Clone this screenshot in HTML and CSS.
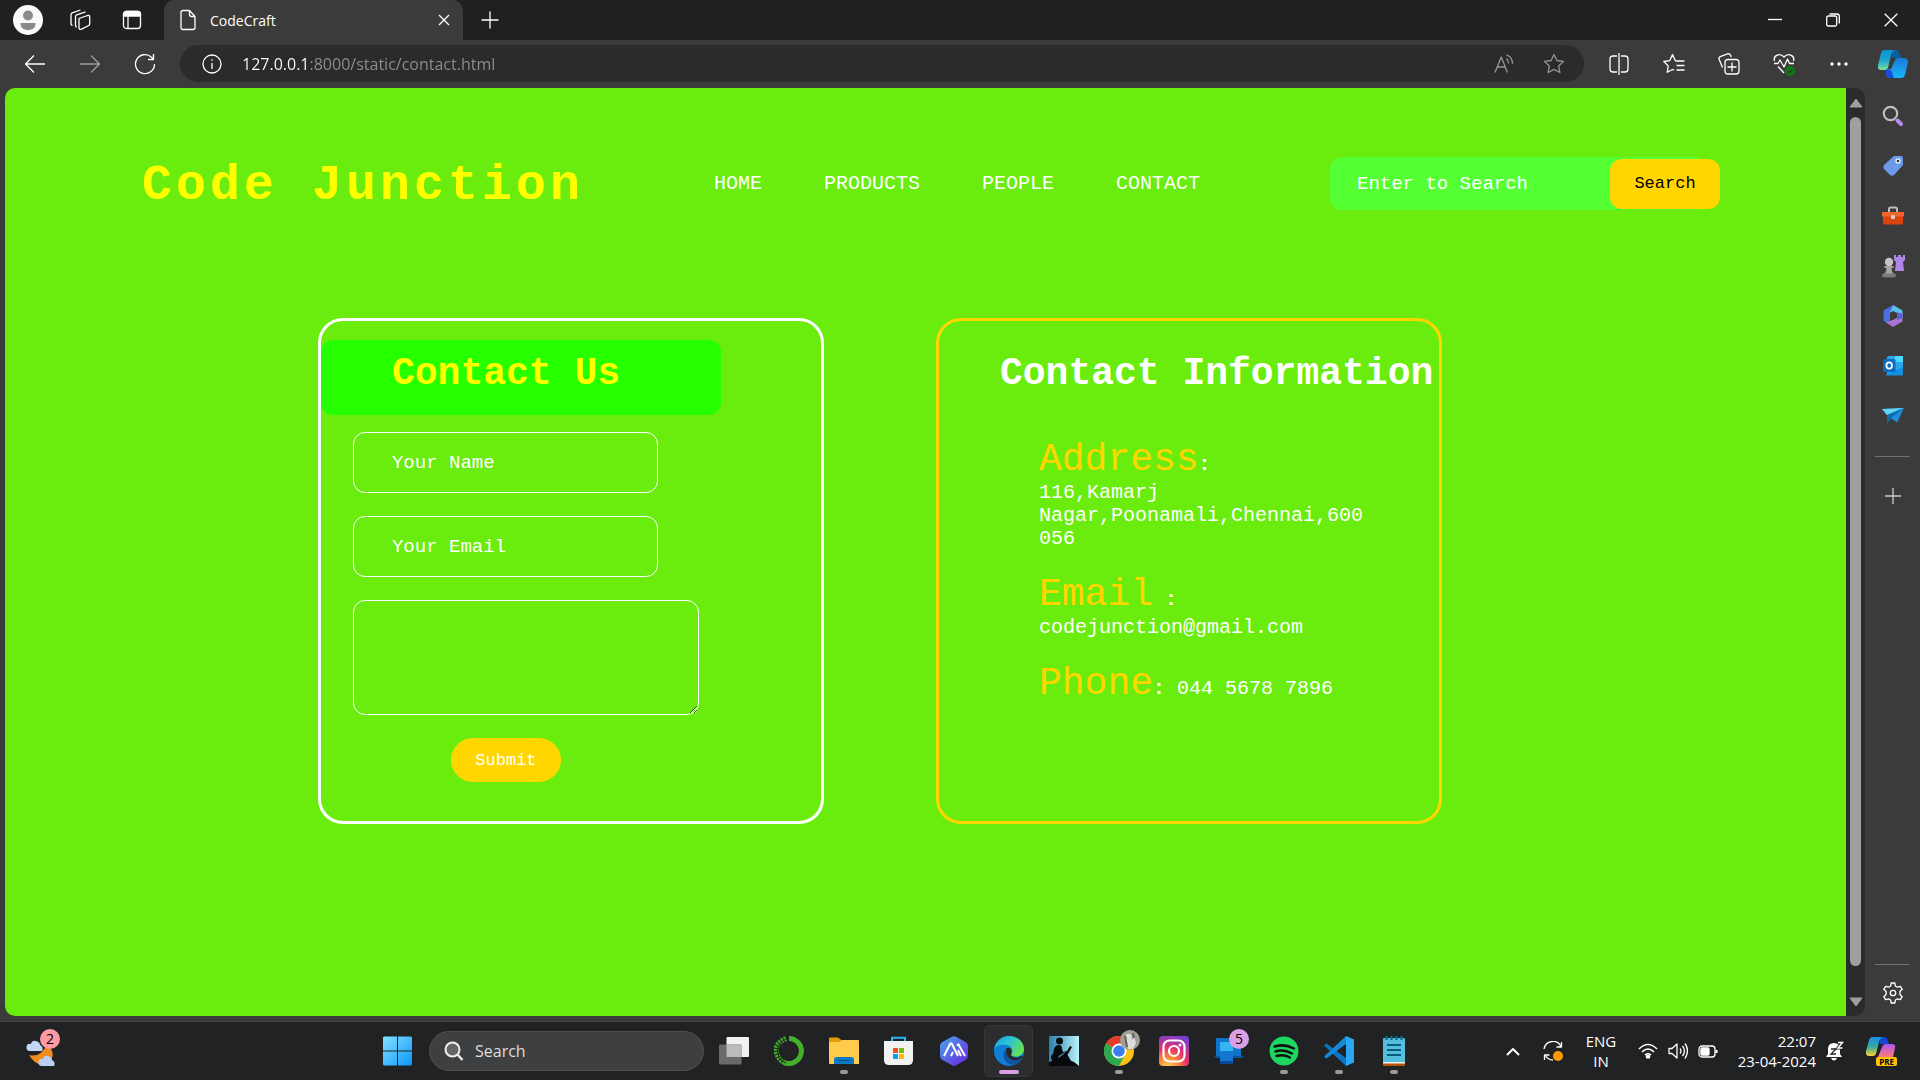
FILE: index.html
```html
<!DOCTYPE html>
<html lang="en">
<head>
<meta charset="utf-8">
<title>CodeCraft</title>
<link rel="stylesheet" href="styles.css">
</head>
<body>
<div class="tabbar">
  <button class="tab-tool" aria-label="Profile"><svg width="30" height="30" viewBox="0 0 30 30"><circle cx="15" cy="15" r="15" fill="#fafafa"/><circle cx="15" cy="10.500" r="5" fill="#8a8a8a"/><path d="M7.500 18h15c0 5-3 7-7.500 7s-7.500-2-7.500-7z" fill="#8a8a8a"/></svg></button>
  <button class="tab-tool" aria-label="Workspaces"><svg width="22" height="22" viewBox="0 0 22 22" class="line"><path d="M10 9.500l8.500-3q2.200-.5 2.200 1.500v7q0 1-1 1.500l-7.200 3.700q-2.500.8-2.500-1.500zM6.500 17V7.500q0-1.200 1.200-1.700l8.800-3M6.500 17l1 1.300M2 15V5.500q0-1.200 1.200-1.700L11.500 1M2 15q.2 1 1.500 1.500"/></svg></button>
  <button class="tab-tool" aria-label="Tab actions"><svg width="20" height="20" viewBox="0 0 20 20" class="line"><rect x="1.500" y="1.500" width="17" height="17" rx="3"/><path d="M1.500 4.500q0-3 3-3h11q3 0 3 3v1.500h-17z" fill="#fff"/><path d="M6 6v12"/></svg></button>
  <div class="tab">
    <svg width="18" height="22" viewBox="0 0 18 22" class="line"><path d="M4 1.500h6.500l5.500 6v11q0 2-2 2H4q-2 0-2-2v-15q0-2 2-2zM10.500 1.500v4q0 2 2 2H16"/></svg>
    <span class="tab-title">CodeCraft</span>
    <button aria-label="Close tab"><svg width="14" height="14" viewBox="0 0 14 14" class="line"><path d="M2 2l10 10M12 2L2 12"/></svg></button>
  </div>
  <button class="new-tab" aria-label="New tab"><svg width="18" height="18" viewBox="0 0 18 18" class="line"><path d="M9 0.500v17M0.500 9h17"/></svg></button>
  <div class="window-controls">
    <button aria-label="Minimize"><svg width="14" height="14" viewBox="0 0 14 14" class="line"><path d="M0 6.500h14"/></svg></button>
    <button aria-label="Restore"><svg width="14" height="14" viewBox="0 0 14 14" class="line"><rect x=".7" y="3" width="10" height="10" rx="1.500"/><path d="M3.500 1H11q2.300 0 2.300 2.300V10.500"/></svg></button>
    <button aria-label="Close"><svg width="14" height="14" viewBox="0 0 14 14" class="line"><path d="M.7.7l12.600 12.600M13.300.7L.7 13.300"/></svg></button>
  </div>
</div>

<div class="toolbar">
  <button class="tool" aria-label="Back"><svg width="22" height="20" viewBox="0 0 22 20" class="line"><path d="M21 10H1.500M10 1.500L1.500 10l8.500 8.500"/></svg></button>
  <button class="tool dim" aria-label="Forward"><svg width="22" height="20" viewBox="0 0 22 20" class="line"><path d="M1 10h19.500M12 1.500l8.500 8.500-8.500 8.500"/></svg></button>
  <button class="tool" aria-label="Refresh"><svg width="22" height="22" viewBox="0 0 22 22" class="line"><path d="M20.500 11A9.500 9.500 0 1 1 17.500 4.200L19.500 6M19.500 1v5.500H14"/></svg></button>
  <div class="address">
    <svg width="20" height="20" viewBox="0 0 20 20" class="line"><circle cx="10" cy="10" r="9"/><path d="M10 9v6M10 5.200v1.600"/></svg>
    <input class="url" type="text" aria-label="Address" value="127.0.0.1:8000/static/contact.html">
    <button class="dim" aria-label="Read aloud"><svg width="20" height="20" viewBox="0 0 20 20" class="line"><path d="M1 18.500L7.300 3l6 15.500M3.300 13h8M12.500 4.500q2 2 2 5M12.500.8q6 2.200 6 9"/></svg></button>
    <button class="dim" aria-label="Add to favorites"><svg width="22" height="22" viewBox="0 0 22 22" class="line"><path d="M11 1.500l2.900 6 6.600.9-4.800 4.600 1.200 6.500-5.900-3.100-5.900 3.100 1.200-6.500L1.500 8.400l6.600-.9z"/></svg></button>
  </div>
  <button class="tool" aria-label="Split screen"><svg width="20" height="22" viewBox="0 0 20 22" class="line"><path d="M10 0v22M8 3H4Q1 3 1 6v10q0 3 3 3h4M12 3h4q3 0 3 3v10q0 3-3 3h-4"/></svg></button>
  <button class="tool" aria-label="Favorites"><svg width="22" height="22" viewBox="0 0 22 22" class="line"><path d="M12.500 8L9.500 1.500 6.800 7.600.8 8.500l4.400 4.400-1 6.400L9.500 16.500l1.500.7M12.500 8h9M13.500 12.500h8M13.500 17h8"/></svg></button>
  <button class="tool" aria-label="Collections"><svg width="22" height="22" viewBox="0 0 22 22" class="line"><path d="M4.500 14.500L1.200 6.500q-.8-2 1-2.900L9.500.9q2-.6 3 1.200l.8 2M10 6.500h8q3 0 3 3v8.500q0 3-3 3h-8q-3 0-3-3V9.500q0-3 3-3zM14 9.500v9M9.500 14h9"/></svg></button>
  <button class="tool" aria-label="Browser essentials"><svg width="22" height="24" viewBox="0 0 22 24" class="line"><path d="M1.500 9C0 3 7 .5 11 5c4-4.500 11-2 9.500 4M1 11.500h4l2-3.500 4 7 3.500-8 2 4.500H21M5 14.500l6 6.500"/><circle cx="17" cy="19" r="5" fill="#0e7a0e" stroke="none"/><path d="M14.700 19l1.700 1.700 3-3.200" stroke="#333"/></svg></button>
  <button class="tool" aria-label="Settings and more"><svg width="18" height="4" viewBox="0 0 18 4"><circle cx="2" cy="2" r="1.700" fill="#fff"/><circle cx="9" cy="2" r="1.700" fill="#fff"/><circle cx="16" cy="2" r="1.700" fill="#fff"/></svg></button>
  <button class="tool" aria-label="Copilot"><svg width="30" height="28" viewBox="0 0 30 28"><defs><linearGradient id="ca" x1="0" y1="0" x2="0" y2="1"><stop offset="0" stop-color="#0b94d4"/><stop offset=".5" stop-color="#18a5d0"/><stop offset="1" stop-color="#7ee0a0"/></linearGradient><linearGradient id="cb" x1="0" y1="0" x2="0" y2="1"><stop offset="0" stop-color="#1d78dd"/><stop offset="1" stop-color="#19b5fa"/></linearGradient></defs><path d="M8 20l5-1 4-9q1-2 3-2h6q4 0 4 4l-3 13q-1 3-4 3H12q-3 0-4-4z" fill="url(#cb)"/><path d="M8 20h5l3 8h-4q-3 0-4-4z" fill="#174bd8"/><path d="M14 0h4q3 0 4 4l1 4h-9z" fill="#075f98"/><path d="M6 0h11q-3 1-4 5l-3 13q-1 2-3 2H3q-4 0-3-5L3 3q1-3 3-3z" fill="url(#ca)"/></svg></button>
</div>

<div class="workspace">
  <main class="site">
    <header class="site-header">
      <h1 class="logo">Code Junction</h1>
      <nav class="site-nav"><a href="#">HOME</a><a href="#">PRODUCTS</a><a href="#">PEOPLE</a><a href="#">CONTACT</a></nav>
      <form class="site-search"><input type="text" aria-label="Enter to Search" placeholder="Enter to Search"><button type="button">Search</button></form>
    </header>
    <div class="cards">
      <section class="card card-form">
        <h2 class="banner">Contact Us</h2>
        <form class="contact-form">
          <input type="text" aria-label="Your Name" placeholder="Your Name">
          <input type="email" aria-label="Your Email" placeholder="Your Email">
          <textarea aria-label="Message"></textarea>
          <button type="button">Submit</button>
        </form>
      </section>
      <section class="card card-info">
        <h2>Contact Information</h2>
        <div class="details">
          <p><span class="label">Address</span><b>:</b><br>116,Kamarj Nagar,Poonamali,Chennai,600 056</p>
          <p><span class="label">Email</span> <b>:</b><br>codejunction@gmail.com</p>
          <p><span class="label">Phone</span><b>:</b> 044 5678 7896</p>
        </div>
      </section>
    </div>
  </main>
  <div class="scrollbar">
    <svg width="14" height="10" viewBox="0 0 14 10"><path d="M7 1l6 8H1z" fill="#9f9f9f" stroke="#9f9f9f" stroke-linejoin="round"/></svg>
    <div class="thumb"></div>
    <svg class="down" width="14" height="10" viewBox="0 0 14 10"><path d="M7 9l6-8H1z" fill="#9f9f9f" stroke="#9f9f9f" stroke-linejoin="round"/></svg>
  </div>
  <aside class="sidebar">
    <button aria-label="Search"><svg width="22" height="22" viewBox="0 0 22 22"><circle cx="8.500" cy="8.500" r="6.700" fill="none" stroke="#bdbdbd" stroke-width="2.200"/><path d="M15.500 15.500l3.500 3.500" stroke="#b98af0" stroke-width="4" stroke-linecap="round"/></svg></button>
    <button aria-label="Shopping"><svg width="22" height="22" viewBox="0 0 22 22"><path d="M12 1h7q2 0 2 2v7l-9 10q-2 1.500-4 0l-6-6q-1.500-2 0-4z" fill="#6c9ae8"/><circle cx="16" cy="6" r="2.700" fill="#e8eefc"/><circle cx="16" cy="6" r="1.300" fill="#333"/></svg></button>
    <button aria-label="Tools"><svg width="22" height="20" viewBox="0 0 22 20"><path d="M7 6V3q0-1.500 1.500-1.500h5Q15 1.500 15 3v3" fill="none" stroke="#bdbdbd" stroke-width="2"/><path d="M1 10h20v7q0 1.500-1.500 1.500h-17Q1 18.500 1 17z" fill="#d9440c"/><path d="M0 6h22v4.500H0z" fill="#f2652b"/><circle cx="11" cy="11" r="2.200" fill="#d0d0d0"/></svg></button>
    <button aria-label="Games"><svg width="24" height="24" viewBox="0 0 24 24"><path d="M13 1h2v2h2V1h3v2h2V1h2v5l-2 2 1 9h-9l1-9-2-2z" fill="#b184e8"/><circle cx="8" cy="8" r="4.200" fill="#c4c4c4"/><path d="M3.500 12h9v2h-2q0 4 2.500 6H3q2.500-2 2.500-6h-2z" fill="#a5a5a5"/><rect x="1" y="19.500" width="14" height="4" rx="2" fill="#7a7a7a"/></svg></button>
    <button aria-label="Microsoft 365"><svg width="22" height="24" viewBox="0 0 22 24"><path d="M11 1L1.500 6.500v10L5 19l3-2V9l5-3V2z" fill="#4d6fdd"/><path d="M11 1l9.500 5.500V14L15 11.500V9l-7-1 3-6z" fill="#5cc0ef"/><path d="M20.500 9v8.500L11 23l-7-4.500 4-1.500 7-3.500V9z" fill="#a974d3"/><path d="M15 8l5.500 2v4L15 16z" fill="#5b5fd0"/><path d="M8 9l3-2 4 2v4.500l-4 2.500-3-2z" fill="#3b3b3b"/></svg></button>
    <button aria-label="Outlook"><svg width="22" height="20" viewBox="0 0 22 20"><rect x="5" width="16" height="19" rx="1.500" fill="#28a8ea"/><path d="M13 0h8v6h-8z" fill="#50d9ff"/><path d="M3 19l18-8v7q0 1.500-1.500 1.500h-15z" fill="#1490df"/><rect x="1" y="3" width="12.500" height="13" rx="1.500" fill="#0a6cc0"/><ellipse cx="7.200" cy="9.500" rx="2.800" ry="3.200" fill="none" stroke="#fff" stroke-width="1.800"/></svg></button>
    <button aria-label="Drop"><svg width="22" height="18" viewBox="0 0 22 18"><path d="M0 2L22 1 15 15.500 9 11l-4 5V8z" fill="#1e8fd8"/><path d="M0 2L22 1 5 8z" fill="#62d4f5"/><path d="M5 8l17-7L9 11l-4 5z" fill="#0b6bb0"/></svg></button>
    <hr>
    <button aria-label="Customize"><svg width="16" height="16" viewBox="0 0 16 16" class="line"><path d="M8 0v16M0 8h16" stroke="#ccc"/></svg></button>
    <hr class="push">
    <button class="settings" aria-label="Settings"><svg width="22" height="22" viewBox="0 0 22 22" class="line"><circle cx="11" cy="11" r="2.700"/><path d="M9.200 1h3.600l.6 3 2 1.200 3-.9 1.800 3-2.300 2.200v3l2.300 2.200-1.800 3-3-.9-2 1.200-.6 3H9.200l-.6-3-2-1.200-3 .9-1.800-3 2.300-2.200v-3L1.800 7.300l1.800-3 3 .9 2-1.200z"/></svg></button>
  </aside>
</div>

<footer class="taskbar">
  <button class="weather" aria-label="Weather"><svg width="34" height="34" viewBox="0 0 34 34"><path d="M3 21q12 3 18-11 9 9 4 16-12 11-22-5z" fill="#f08c1e"/><path d="M4 17q-4 0-3.500-4T5 10q1-4 5-3t4 4q4 2 2 6z" fill="#c4d6f5"/><path d="M16 32q-4 0-3.500-4t4.500-3q1-4 5-3t4 4q4 2 2 6z" fill="#b9cff2"/></svg><span class="badge badge-pink">2</span></button>
  <div class="apps">
    <button aria-label="Start"><svg width="30" height="30" viewBox="0 0 30 30"><defs><linearGradient id="w" x1="0" y1="0" x2="1" y2="1"><stop offset="0" stop-color="#86e0ff"/><stop offset="1" stop-color="#0a97fa"/></linearGradient></defs><path d="M1 .5h13v14H0V1.500zM15 .5h13l1 1v13H15zM0 15.500h14v14H1l-1-1zM15 15.500h14v13l-1 1H15z" fill="url(#w)"/></svg></button>
    <label class="task-search"><svg width="20" height="20" viewBox="0 0 20 20"><circle cx="8.500" cy="8.500" r="7" fill="#666" stroke="#eee" stroke-width="2"/><path d="M13.500 13.500L18.500 19" stroke="#eee" stroke-width="2.400"/></svg><input type="text" aria-label="Search" placeholder="Search"></label>
    <button aria-label="Task view"><svg width="30" height="28" viewBox="0 0 30 28"><rect x="7.500" width="22.500" height="20" rx="1" fill="#f2f2f2"/><rect y="7.500" width="22.500" height="20" rx="1" fill="#6a6a6a"/><path d="M7.500 7.500h15V20h-15z" fill="#bbb"/></svg></button>
    <button aria-label="Anaconda"><svg width="30" height="30" viewBox="0 0 30 30" fill="none" stroke="#43b02a"><path d="M15 2.500a12.500 12.500 0 1 1-5 24" stroke-width="5"/><path d="M12 2.500Q-1 8 3 18q2 7 9 9.500" stroke-width="5" stroke-dasharray="2 1"/><path d="M12 3Q1 8 4 18q2 7 8 9" stroke="#222" stroke-width="1"/></svg></button>
    <button class="running" aria-label="File Explorer"><svg width="30" height="28" viewBox="0 0 30 28"><path d="M0 1.500Q0 .5 1 .5h8l4 3v6H0z" fill="#e09b0b"/><path d="M0 5h9q2 0 4-2h16q1 0 1 1v23H1q-1 0-1-1z" fill="#ffcb4b"/><path d="M5 27v-4q0-3 3-3h14q3 0 3 3v4z" fill="#0f78c9"/><path d="M9 23.500h12" stroke="#084a85"/></svg></button>
    <button aria-label="Microsoft Store"><svg width="30" height="30" viewBox="0 0 30 30"><path d="M8 6V1.700h13V6" fill="none" stroke="#28b7f0" stroke-width="2"/><path d="M0 5h29v19q0 5-5 5H5q-5 0-5-5z" fill="#f2f2f2"/><path d="M9 12h5v5H9z" fill="#f25022"/><path d="M15 12h5v5h-5z" fill="#7fba00"/><path d="M9 18h5v5H9z" fill="#00a4ef"/><path d="M15 18h5v5h-5z" fill="#ffb900"/></svg></button>
    <button aria-label="App"><svg width="28" height="30" viewBox="0 0 28 30"><defs><linearGradient id="h" x1="0" y1="0" x2="1" y2="1"><stop offset="0" stop-color="#4aa8e8"/><stop offset="1" stop-color="#6a22e0"/></linearGradient></defs><path d="M12 .8q2-1 4 0l10 5.500q2 1 2 3.500v10.500q0 2.500-2 3.500l-10 5.500q-2 1-4 0L2 23.800q-2-1-2-3.500V9.800Q0 7.300 2 6.300z" fill="url(#h)"/><path d="M4 20l6-12q1-1.500 2 0l6 12M11 20l2-4M18 14l3 6M17 9.500l1.500-1L25 20" fill="none" stroke="#fff" stroke-width="2"/></svg></button>
    <button class="active" aria-label="Microsoft Edge"><svg width="30" height="30" viewBox="0 0 30 30"><defs><linearGradient id="e" x1="0" y1="0" x2="1" y2=".5"><stop offset="0" stop-color="#1b9de0"/><stop offset=".5" stop-color="#2cc3d4"/><stop offset="1" stop-color="#63e05c"/></linearGradient></defs><circle cx="15" cy="15" r="15" fill="#0f7fd6"/><path d="M0 13C2 3 10 0 15 0c9 0 15 6 15 13 0 5-4 7.500-8 7.500-3 0-5-1-4.500-2.500 2-3 1-8-5-9C7 8 2 10 0 13z" fill="url(#e)"/><path d="M11 14c-4 6 0 14 8 15 4-1 7-4 8.500-7C20 26 12 22 11 14z" fill="#10539f"/><path d="M12 13c3-3 6 0 5.500 3-.5 2-1 3.500.5 4.500 3 2 8 1 9-1l2 1-4 4c-8 1-14-4-13-11.500z" fill="#262626"/><path d="M11.500 16c-.5 7 8 11 16 6l-3 4.500C17 30 8 24 11.500 16z" fill="#10539f"/></svg></button>
    <button aria-label="Kindle"><svg width="30" height="30" viewBox="0 0 30 30"><defs><linearGradient id="k"><stop offset="0" stop-color="#2b7fae"/><stop offset="1" stop-color="#b8f4fb"/></linearGradient></defs><path d="M0 0h30v30H0z" fill="url(#k)"/><circle cx="10.500" cy="5" r="3.500" fill="#07090c"/><path d="M0 30v-4l3-1-1-4q0-2 2-3l1-5q1-4 5-4 3 0 3 4l1 3 4-1 3-5 2 1-4 7-5 3 6 3 5 2 5 4z" fill="#07090c"/><path d="M10 20l6-4 1 4-5 5H8z" fill="#5fb4d0"/><path d="M8 23l9-7 5 9H8z" fill="#07090c"/></svg></button>
    <button class="running" aria-label="Chrome"><svg width="36" height="36" viewBox="0 0 36 36"><circle cx="15" cy="21" r="15" fill="#fbc116"/><path d="M15 21L2 13.500A15 15 0 0 1 28 13.500H15z" fill="#e33b2e"/><path d="M2 13.500A15 15 0 0 0 15 36l6-11.500-6-3.500z" fill="#2da94f"/><circle cx="15" cy="21" r="7.500" fill="#fff"/><circle cx="15" cy="21" r="5.800" fill="#3b7ded"/><circle cx="26" cy="10" r="10" fill="#a19f98"/><path d="M22 4h5l1 6 2-3 2 6-3 6h-5z" fill="#dcdcda"/><path d="M21 6l2 11M29 3l1 5" stroke="#62665f" stroke-width="2"/></svg></button>
    <button aria-label="Instagram"><svg width="30" height="30" viewBox="0 0 30 30"><defs><radialGradient id="i" cx=".3" cy="1.050" r="1.100"><stop offset="0" stop-color="#ffd35a"/><stop offset=".3" stop-color="#fb8d38"/><stop offset=".6" stop-color="#e6306c"/><stop offset="1" stop-color="#7a3fd0"/></radialGradient></defs><rect width="30" height="30" rx="4" fill="url(#i)"/><g fill="none" stroke="#fff" stroke-width="2.200"><rect x="4.500" y="4.500" width="21" height="21" rx="6"/><circle cx="15" cy="15" r="5"/></g><circle cx="21" cy="9" r="1.500" fill="#fff"/></svg></button>
    <button aria-label="Phone Link"><svg width="30" height="30" viewBox="0 0 30 30"><path d="M2 2h25v18H2z" fill="#0f74c8"/><path d="M0 20h30l-2 2H2z" fill="#0a549a"/><path d="M6 6h13v20H6z" fill="#34b4f0"/><path d="M6 15h13v11H6z" fill="#1477d4"/><path d="M6 25h13v3H6z" fill="#0b4a9a"/></svg><span class="badge badge-lilac">5</span></button>
    <button class="running" aria-label="Spotify"><svg width="30" height="30" viewBox="0 0 30 30"><circle cx="15" cy="15" r="14.500" fill="#1ed760"/><path d="M5.500 10.500q10-3 19.500 2M6.500 15.500q8.500-2.500 16.500 2M7.500 20q7-2 13.500 1.500" fill="none" stroke="#111" stroke-width="2.500" stroke-linecap="round"/></svg></button>
    <button class="running" aria-label="VS Code"><svg width="30" height="30" viewBox="0 0 30 30"><path d="M0 9.500l2.500-2L22 22v8z" fill="#0b74be"/><path d="M0 20.500l2.500 2L22 8V0z" fill="#1688d4"/><path d="M22 0l8 3.500v23L22 30z" fill="#2aa6f2"/></svg></button>
    <button class="running" aria-label="Notepad"><svg width="22" height="30" viewBox="0 0 22 30"><path d="M0 26h22v3q0 1-1 1H1q-1 0-1-1z" fill="#b5550d"/><path d="M0 25h22v2.500H0z" fill="#eee"/><path d="M0 3q0-1 1-1h20q1 0 1 1v23H0z" fill="#54bfdd"/><path d="M4 9h14M4 14h14M4 19h14" stroke="#065b7d" stroke-width="1.800"/><path d="M3.500 0v4M8.500 0v4M13.500 0v4M18.500 0v4" stroke="#0b6d8d" stroke-width="2.200"/></svg></button>
  </div>
  <div class="tray">
    <button class="w40" aria-label="Show hidden icons"><svg width="14" height="9" viewBox="0 0 14 9" class="line bold"><path d="M1 8l6-6 6 6"/></svg></button>
    <button class="w40" aria-label="Update"><svg width="20" height="20" viewBox="0 0 20 20" class="line"><path d="M1 8A9 9 0 0 1 18 5.500M18.500 1v5H13.500M2 14q3 5 8 5M1.500 19v-5H6.500"/><circle cx="15" cy="15" r="5" fill="#ff9800" stroke="none"/></svg></button>
    <div class="lang">ENG<br>IN</div>
    <button class="w30" aria-label="Network"><svg width="20" height="16" viewBox="0 0 20 16" class="line mid"><path d="M1 6q9-9 18 0M4 9q6-6 12 0M7 12q3-3 6 0"/><circle cx="10" cy="13.500" r="1.500" fill="#fff"/></svg></button>
    <button class="w30" aria-label="Volume"><svg width="20" height="18" viewBox="0 0 20 18" class="line"><path d="M1 6.500h3l5-4.500v14l-5-4.500H1zM12 6.500q2 2.500 0 5M14.500 4q4 5 0 10M17 1.500q5 7 0 15"/></svg></button>
    <button class="w30" aria-label="Battery"><svg width="20" height="13" viewBox="0 0 20 13" class="line"><rect x="1" y="1" width="16" height="11" rx="3"/><rect x="3" y="3" width="8" height="7" rx="1" fill="#fff"/><path d="M18.500 5v3" stroke-width="2"/></svg></button>
    <div class="clock">22:07<br>23-04-2024</div>
    <button class="w38" aria-label="Notifications"><svg width="18" height="20" viewBox="0 0 18 20"><path d="M8 2q6 0 6 6v5l2 3H0l2-3V8q0-6 6-6zM5 17h6q-1 2.500-3 2.500T5 17z" fill="#fff"/><path d="M5 8h5l-5 5h5" fill="none" stroke="#222" stroke-width="1.300"/><path d="M12 1.500h4.500L12 7h4.500" fill="none" stroke="#222" stroke-width="3"/><path d="M12 1.500h4.500L12 7h4.500" fill="none" stroke="#fff" stroke-width="1.400"/></svg></button>
    <button class="pre" aria-label="Copilot preview"><svg width="30" height="28" viewBox="0 0 30 28"><defs><linearGradient id="p" x1="0" y1="0" x2="0" y2="1"><stop offset="0" stop-color="#1b8de8"/><stop offset=".5" stop-color="#31a9a0"/><stop offset="1" stop-color="#ffd22e"/></linearGradient><linearGradient id="q" x1="0" y1="0" x2="0" y2="1"><stop offset="0" stop-color="#a855f0"/><stop offset="1" stop-color="#ff7a7a"/></linearGradient></defs><path d="M12 20l4-10q1-3 4-3h6q4 0 3 4l-2 9z" fill="url(#q)"/><path d="M14 0h4q3 0 4 4l1 3h-9z" fill="#1648d0"/><path d="M6 0h11q-3 1-4 5l-3 12q-1 2-3 2H3q-4 0-3-5L3 3q1-3 3-3z" fill="url(#p)"/></svg><span class="pre-tag">PRE</span></button>
  </div>
</footer>
</body>
</html>
```
FILE: styles.css
```css
* { box-sizing: border-box; }

body {
  margin: 0;
  min-height: 100vh;
  display: flex;
  flex-direction: column;
  background: #3b3b3b;
  color: #fff;
  font-family: "Open Sans", "Noto Sans", sans-serif;
  font-size: 15px;
}

button {
  display: flex;
  align-items: center;
  justify-content: center;
  padding: 0;
  border: 0;
  background: none;
  color: inherit;
  font: inherit;
}

input, textarea { font: inherit; color: inherit; border: 0; outline: 0; background: none; }
svg { display: block; flex: none; }
.line { fill: none; stroke: #fff; stroke-width: 1.3; stroke-linejoin: round; }
.line.mid { stroke-width: 1.6; }
.line.bold { stroke-width: 2; }
.dim { opacity: .5; }

/* Tab strip */
.tabbar { display: flex; height: 40px; padding-left: 2px; background: #202020; }
.tab-tool { width: 52px; }
.tab {
  display: flex;
  align-items: center;
  width: 299px;
  margin-left: 6px;
  padding: 0 12px 0 15px;
  background: #3b3b3b;
  border-radius: 10px 10px 0 0;
}
.tab-title { flex: 1; margin-left: 13px; font-size: 14px; }
.new-tab { width: 54px; }
.window-controls { display: flex; margin-left: auto; }
.window-controls button { width: 58px; }

/* Toolbar */
.toolbar { display: flex; align-items: center; height: 48px; padding: 0 0 1px 7px; }
.tool { width: 55px; height: 40px; }
.tool:last-child { width: 54px; }
.address {
  display: flex;
  align-items: center;
  flex: 1;
  height: 37px;
  margin: 0 7px 0 8px;
  padding: 0 5px 0 22px;
  border-radius: 19px;
  background: #2b2b2b;
}
.address button { width: 50px; height: 36px; }
.url {
  flex: 1;
  height: 30px;
  margin-left: 20px;
  padding: 0;
  font-size: 16px;
  color: transparent;
  background: linear-gradient(90deg, #fff 67px, #8f8f8f 67px);
  background-clip: text;
}

/* Browser content row */
.workspace { display: flex; flex: 1; padding: 0 0 5px 5px; }
.site {
  flex: 1;
  min-width: 0;
  background: #6aed0e;
  border-radius: 10px 0 0 10px;
  font-family: "Courier New", "Liberation Mono", monospace;
  font-size: 20px;
}
.scrollbar {
  display: flex;
  flex-direction: column;
  align-items: center;
  gap: 9px;
  width: 19px;
  padding: 10px 0 9px;
  background: #2b2b2b;
  border-radius: 0 10px 10px 0;
}
.scrollbar .down { margin-top: 22px; }
.thumb { flex: 1; width: 11px; border-radius: 6px; background: #9f9f9f; }
.sidebar { display: flex; flex-direction: column; align-items: center; width: 55px; padding-top: 3px; }
.sidebar button { width: 50px; height: 50px; }
.sidebar hr { width: 35px; height: 1px; margin: 15px 0 14px; border: 0; background: #707070; }
.sidebar .push { margin: auto 0 5px; }
.sidebar .settings { height: 46px; }

/* Site header */
.site-header {
  display: flex;
  align-items: center;
  justify-content: space-between;
  padding: 69px 126px 0 137px;
}
.logo { margin: 0; padding-top: 4px; font-size: 50px; line-height: 49px; letter-spacing: 4px; color: #ff0; }
.site-nav { display: flex; gap: 62px; }
.site-nav a { color: #fff; text-decoration: none; }
.site-search { display: flex; align-items: center; width: 390px; }
.site-search input {
  width: 377px;
  height: 53px;
  padding: 0 27px;
  border-radius: 12px;
  background: #54ff33;
  font-size: 19px;
}
.site-search button {
  flex: none;
  width: 110px;
  height: 50px;
  margin-left: -97px;
  border-radius: 12px;
  background: #ffd600;
  color: #000;
  font-size: 17px;
}
::placeholder { color: #fff; opacity: 1; }

/* Contact cards */
.cards { display: flex; gap: 112px; margin: 108px 0 0 17%; }
.card { width: 506px; min-height: 506px; border: 3px solid #fff; border-radius: 25px; }
.card h2 { margin: 0; font-size: 38px; line-height: 43px; white-space: nowrap; }
.card .banner {
  width: 400px;
  min-height: 75px;
  padding: 12px 0 20px 71px;
  border-radius: 12px;
  background: #26ff00;
  color: #ff0;
}
.card-form { padding-top: 19px; }
.contact-form { display: flex; flex-direction: column; gap: 23px; padding: 17px 0 0 32px; }
.contact-form input, .contact-form textarea { border: 1px solid #fff; border-radius: 12px; font-size: 19px; }
.contact-form input { width: 305px; height: 61px; padding: 0 38px; }
.contact-form textarea { width: 346px; height: 115px; }
.contact-form button {
  width: 110px;
  height: 44px;
  margin-left: 98px;
  border-radius: 22px;
  background: #ffd600;
  font-size: 17px;
}
.card-info { padding: 31px 0 0 61px; border-color: #ffd600; }
.details { width: 332px; margin: 44px 0 0 39px; line-height: 23px; }
.details p { margin: 0 0 24px; }
.label { font-size: 38px; line-height: 42px; color: #ffd600; }

/* Taskbar */
.taskbar {
  display: grid;
  grid-template-columns: 370px auto 1fr;
  height: 59px;
  background: #202224;
  border-top: 1px solid #454545;
}
.weather { position: relative; width: 34px; margin-left: 26px; }
.badge {
  position: absolute;
  width: 20px;
  height: 20px;
  border-radius: 50%;
  color: #000;
  font-size: 14px;
  line-height: 20px;
  text-align: center;
}
.badge-pink { top: 7px; left: 14px; background: #ff9aa5; }
.badge-lilac { top: 7px; right: 7px; background: #d9a0e6; }
.apps, .tray { display: flex; align-items: center; }
.apps button { position: relative; width: 55px; height: 58px; }
.running::after, .active::after {
  content: "";
  position: absolute;
  bottom: 6px;
  width: 8px;
  height: 4px;
  border-radius: 2px;
  background: #9a9a9a;
}
.active::after { width: 20px; background: #d9a0e6; }
.active::before {
  content: "";
  position: absolute;
  inset: 3px;
  border: 1px solid #383838;
  border-radius: 6px;
  background: #ffffff0d;
}
.active svg { position: relative; }
[aria-label="Chrome"] svg { margin: 0 0 6px 6px; }
.task-search {
  display: flex;
  align-items: center;
  gap: 9px;
  width: 275px;
  height: 40px;
  margin: 0 2px 0 4px;
  padding-left: 14px;
  border: 1px solid #505050;
  border-radius: 20px;
  background: #3e3f40;
}
.task-search input { flex: 1; min-width: 0; font-size: 16px; }
.task-search ::placeholder { color: #ddd; }
.tray { justify-content: flex-end; padding-right: 12px; line-height: 20px; }
.w30 { width: 30px; }
.w38 { width: 38px; }
.w40 { width: 40px; }
.lang { width: 60px; padding-right: 4px; text-align: center; }
.clock { width: 93px; text-align: right; }
.pre { position: relative; width: 54px; }
.pre-tag {
  position: absolute;
  right: 11px;
  bottom: -1px;
  padding: 0 3px;
  border-radius: 2px;
  background: #ffc400;
  color: #000;
  font-size: 8px;
  font-weight: 700;
  line-height: 9px;
}
```
